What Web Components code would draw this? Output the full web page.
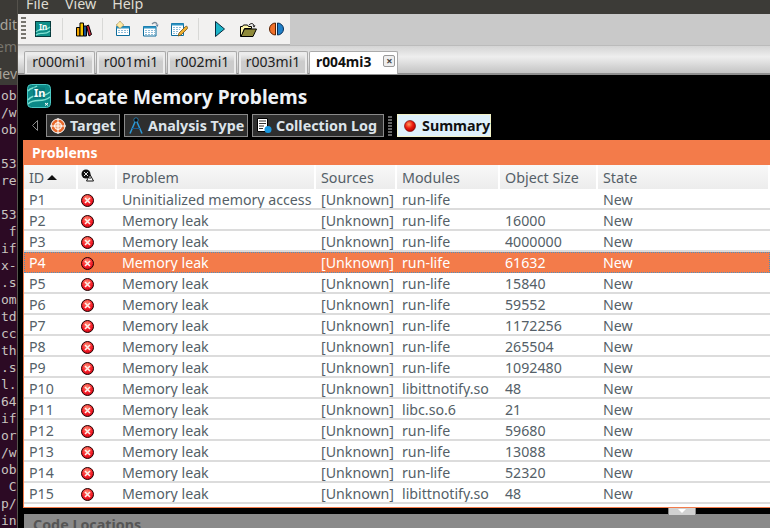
<!DOCTYPE html>
<html>
<head>
<meta charset="utf-8">
<style>
  html, body { margin: 0; padding: 0; background: #000; }
  body { width: 770px; height: 528px; overflow: hidden; font-family: "Noto Sans", "Open Sans", sans-serif; }
</style>
</head>
<body>
<vtune-app></vtune-app>

<script>
const ICONS = {
  intel: `<svg width="24" height="24" viewBox="0 0 24 24"><rect x=".5" y=".5" width="23" height="23" rx="4" fill="#0b8a88" stroke="#4cc8c4"/><path d="M1 16 C7 8 14 16 23 8 M1 20 C8 13 15 20 23 13 M1 7 C4 3 7 5 10 2" stroke="#7fe0d2" stroke-width="1.500" fill="none"/><path d="M6 3.500h12v11h-12z" fill="#0a6a70" opacity=".55"/><text x="7" y="13" font-family="Noto Sans" font-weight="700" font-size="11" fill="#fff">In</text><path d="M18 19l3 2.500M21 19l-3 2.500" stroke="#fff"/></svg>`,
  intelSmall: `<svg width="16" height="16" viewBox="0 0 16 16"><rect x=".5" y=".5" width="15" height="15" fill="#0f8f88" stroke="#063a3c"/><path d="M1 11 C5 6 9 12 15 6 M1 14 C5 10 9 15 15 10" stroke="#7fe0d2" stroke-width="1.100" fill="none"/><text x="4" y="9" font-family="Noto Sans" font-weight="700" font-size="8" fill="#fff">In</text></svg>`,
  bars: `<svg width="17" height="16" viewBox="0 0 17 16"><path d="M1.500 6.500h3.500v8.500h-3.500z" fill="#f2a400" stroke="#000"/><path d="M5 2h3.500v13h-3.500z" fill="#f7c600" stroke="#000"/><path d="M8.500 5h3v10h-3z" fill="#16518f" stroke="#000"/><path d="M11.500 5l2-1 3 9.500-2.500 1.500z" fill="#d8203a" stroke="#000"/></svg>`,
  newdoc: `<svg width="16" height="16" viewBox="0 0 16 16"><path d="M1.500 5.500h13v9h-13z" fill="#fff" stroke="#0c6c9c"/><path d="M1.500 5.500h13v2h-13z" fill="#2d94c4"/><path d="M3 9.500h10M3 11.500h10" stroke="#8cbcd8" stroke-dasharray="2 1"/><path d="M5 0l2 2.500 2 1.500-2 1.500-2 2-2-2-2-1.500 2-1.500z" fill="#ffe9a0" stroke="#a08a50" stroke-width=".6"/></svg>`,
  opendoc: `<svg width="16" height="16" viewBox="0 0 16 16"><path d="M.5 5.500h12.500v9.500h-12.500z" fill="#fff" stroke="#0c6c9c"/><path d="M.5 5.500h12.500v2h-12.500z" fill="#2d94c4"/><path d="M2 9.500h10M2 11.500h10M2 13.500h10" stroke="#8cbcd8" stroke-dasharray="2 1"/><path d="M9 3c2-2 4-2 5 0" stroke="#7a8a98" stroke-width="1.300" fill="none"/><path d="M12.500 3.500h3l-1 2.500z" fill="#5c7a98"/></svg>`,
  editdoc: `<svg width="17" height="16" viewBox="0 0 17 16"><path d="M.5 2.500h12v12h-12z" fill="#fff" stroke="#0c6c9c"/><path d="M.5 2.500h12v2h-12z" fill="#2d94c4"/><path d="M2 6.500h9M2 8.500h7M2 10.500h5M2 12.500h4" stroke="#8cbcd8" stroke-dasharray="2 1"/><path d="M7 15l1-3 6-6c1-1 2-1 2.500 0 .4.800 0 1.500-.5 2l-6 6z" fill="#f0b030" stroke="#6a5020" stroke-width=".8"/></svg>`,
  play: `<svg width="10" height="16" viewBox="0 0 10 16"><path d="M.5 .5v15l9-7.500z" fill="#1cb4c8" stroke="#062c40"/></svg>`,
  folder: `<svg width="17" height="15" viewBox="0 0 17 15"><path d="M.5 14.500v-10h2l1-1.500h4l1 1.500h3v2h-7l-3 8z" fill="#fff6a8" stroke="#000"/><path d="M1 14.500l3.500-7.500h12l-3.500 7.500z" fill="#8f8a3a" stroke="#000"/><path d="M9 3c2-2 4-2 5 .5" stroke="#000" fill="none"/><path d="M12.500 3.500h3l-1.500 2z"/></svg>`,
  compare: `<svg width="15" height="14" viewBox="0 0 15 14"><path d="M6.500 1a6 6 0 0 0 0 12z" fill="#f0702a" stroke="#5a2000"/><path d="M8.500 1a6 6 0 0 1 0 12z" fill="#2080c8" stroke="#08305a"/></svg>`,
  target: `<svg width="16" height="16" viewBox="0 0 16 16"><circle cx="8" cy="8" r="7" fill="#e8682a" stroke="#fff" stroke-width="1"/><circle cx="8" cy="8" r="3.500" fill="#f4a070" stroke="#fff"/><path d="M8 0v16M0 8h16" stroke="#fff"/></svg>`,
  compass: `<svg width="16" height="18" viewBox="0 0 16 18"><circle cx="8" cy="3" r="2.200" fill="#0a0a0a" stroke="#2c9ad8" stroke-width=".7"/><path d="M7 5l-5 11.500M9 5l5 11.500" stroke="#2c9ad8" stroke-width="1.500" fill="none"/><path d="M4 11.500h8" stroke="#1a5a90"/></svg>`,
  log: `<svg width="16" height="17" viewBox="0 0 16 17"><path d="M1.500 1.500h10v13h-10z" fill="#fff" stroke="#000"/><path d="M3 4h7M3 6.500h7M3 9h5M3 11.500h4" stroke="#333"/><circle cx="12" cy="12.500" r="3.500" fill="#1898e0"/></svg>`,
  ball: `<svg width="12" height="12" viewBox="0 0 12 12"><defs><radialGradient id="b" cx=".4" cy=".35" r=".7"><stop offset="0" stop-color="#ff9a60"/><stop offset=".5" stop-color="#ee1c10"/><stop offset="1" stop-color="#a00"/></radialGradient></defs><circle cx="6" cy="6" r="5.500" fill="url(#b)" stroke="#600" stroke-width=".6"/></svg>`,
  error: `<svg width="13" height="13" viewBox="0 0 13 13"><defs><radialGradient id="e" cx=".45" cy=".3" r=".8"><stop offset="0" stop-color="#ff8a70"/><stop offset=".55" stop-color="#f8202a"/><stop offset="1" stop-color="#c00010"/></radialGradient></defs><circle cx="6.500" cy="6.500" r="6" fill="url(#e)" stroke="#200" stroke-width="1"/><path d="M4 4l5 5M9 4l-5 5" stroke="#fff0ea" stroke-width="1.600"/></svg>`,
  severity: `<svg width="13" height="13" viewBox="0 0 13 13"><circle cx="5" cy="5" r="4.500" fill="#111"/><path d="M3 3l4 4M7 3l-4 4" stroke="#fff" stroke-width=".9"/><path d="M9 5.500l3.500 6.500h-7z" fill="#fff" stroke="#111"/><path d="M9 7.500v2.500" stroke="#111"/></svg>`,
  back: `<svg width="6" height="11" viewBox="0 0 6 11"><path d="M5.500 .5v10l-5-5z" fill="#000" stroke="#8a8a8a"/></svg>`
};

class AppIcon extends HTMLElement {
  connectedCallback() {
    this.attachShadow({ mode: "open" });
    this.shadowRoot.innerHTML = `
      <style>:host { display: inline-flex; align-items: center; justify-content: center; flex: none; } svg { display: block; }</style>
      ${ICONS[this.getAttribute("name")]}`;
  }
}

class TerminalStrip extends HTMLElement {
  constructor() {
    super();
    this.attachShadow({ mode: "open" });
    const lines = ["ob", "/w", "ob", "", "53", "re", "", "53", " f", "if", "x-", ".s", "om", "td", "cc", "th", ".s", "l.", "64", "if", "or", "/w", "ob", " C", "p/", "in"];
    this.shadowRoot.innerHTML = `
      <style>
        :host { display: block; width: 18px; height: 528px; box-sizing: border-box; overflow: hidden; background: #2c0a24; color: #c8c4c0;
          font: 13px/17px "DejaVu Sans Mono", monospace; border-right: 1px solid #55524c; }
        .menu { height: 85px; box-sizing: border-box; padding-top: 15px; background: #3c3a36; font: 14px/20px "Noto Sans", sans-serif; color: #a8a49c; text-align: right; }
        .menu div { height: 22px; white-space: nowrap; overflow: hidden; direction: rtl; }
        .menu .dim { color: #77746c; }
        .menu .last { margin-top: 5px; }
        .term { padding: 2px 0 0 1px; }
        .line { height: 17px; white-space: pre; overflow: hidden; }
      </style>
      <div class="menu"><div>dit</div><div class="dim">em</div><div class="last">iev</div></div>
      <div class="term">${lines.map(l => `<div class="line">${l}</div>`).join("")}</div>`;
  }
}

class MenuBar extends HTMLElement {
  constructor() {
    super();
    this.attachShadow({ mode: "open" });
    this.shadowRoot.innerHTML = `
      <style>
        :host { display: flex; height: 14px; background: #3c3b37; color: #dfdbd2; font-size: 14.300px; overflow: hidden; align-items: flex-end; padding-left: 8px; gap: 16px; }
        span { line-height: 20px; }
      </style>
      <span>File</span><span>View</span><span>Help</span>`;
  }
}

class MainToolbar extends HTMLElement {
  constructor() {
    super();
    this.attachShadow({ mode: "open" });
    this.shadowRoot.innerHTML = `
      <style>
        :host { display: block; height: 31px; background: #c9c9c9; }
        .bar { display: flex; align-items: center; width: 272px; height: 31px; background: #f2f1f0; box-sizing: border-box; border-bottom: 1px solid #b4b4b4; }
        .grip { width: 5px; height: 24px; margin: 0 9px 0 3px; background: repeating-linear-gradient(#77756f 0 2px, #f2f1f0 2px 4px); }
        .sep { width: 1px; height: 22px; background: #d8d8d6; }
        .b { display: flex; justify-content: center; }
      </style>
      <div class="bar">
        <div class="grip"></div>
        <div class="b" style="width:16px"><app-icon name="intelSmall"></app-icon></div>
        <div style="width:11px"></div><div class="sep"></div><div style="width:12px"></div>
        <div class="b" style="width:17px"><app-icon name="bars"></app-icon></div>
        <div style="width:10px"></div><div class="sep"></div><div style="width:12px"></div>
        <div class="b" style="width:16px"><app-icon name="newdoc"></app-icon></div>
        <div style="width:12px"></div>
        <div class="b" style="width:16px"><app-icon name="opendoc"></app-icon></div>
        <div style="width:12px"></div>
        <div class="b" style="width:17px"><app-icon name="editdoc"></app-icon></div>
        <div style="width:10px"></div><div class="sep"></div><div style="width:16px"></div>
        <div class="b" style="width:10px"><app-icon name="play"></app-icon></div>
        <div style="width:15px"></div>
        <div class="b" style="width:17px"><app-icon name="folder"></app-icon></div>
        <div style="width:12px"></div>
        <div class="b" style="width:15px"><app-icon name="compare"></app-icon></div>
      </div>`;
  }
}

class ResultTabs extends HTMLElement {
  constructor() {
    super();
    this.attachShadow({ mode: "open" });
    const tabs = [["r000mi1", 71], ["r001mi1", 70], ["r002mi1", 70], ["r003mi1", 70]];
    this.shadowRoot.innerHTML = `
      <style>
        :host { display: flex; height: 30px; box-sizing: border-box; padding: 5px 0 0 6px; gap: 1px; color: #222; font-size: 14px;
          background: linear-gradient(#d4d4d4, #eee 40%, #c4c4c4); border-top: 1px solid #bbb; border-bottom: 2px solid #8f8f8f; }
        .tab { box-sizing: border-box; height: 23px; border: 1px solid #aaa; border-bottom: 0; border-radius: 2px 2px 0 0; padding: 2px 2px 0; background: #ececec; }
        .tab div { height: 19px; line-height: 15px; text-align: center; background: linear-gradient(#eee, #ccc 40%, #ccc); }
        .on { width: 89px; background: #fff; display: flex; align-items: center; padding: 0 0 4px 6px; font-weight: 700; font-size: 13.800px; gap: 12px; color: #111; }
        .x { width: 10px; height: 10px; border: 1px solid #999; border-radius: 2px; color: #444; font-size: 11px; line-height: 10px; text-align: center; background: #eee; }
      </style>
      ${tabs.map(t => `<div class="tab" style="width:${t[1]}px"><div>${t[0]}</div></div>`).join("")}
      <div class="tab on">r004mi3<span class="x">×</span></div>`;
  }
}

class NavButton extends HTMLElement {
  constructor() {
    super();
    this.attachShadow({ mode: "open" });
    this.shadowRoot.innerHTML = `
      <style>
        :host { display: inline-flex; align-items: center; gap: 4px; height: 23px; box-sizing: border-box; padding: 0 3px; background: #2e2e2e; border: 1px solid #8a8a8a; color: #dde4ea; font-size: 14.300px; font-weight: 700; white-space: nowrap; }
        :host([active]) { background: #dff1fb; border-color: #f4f4c8; color: #111; gap: 6px; padding: 0 4px 0 6px; }
      </style>
      <slot name="icon"></slot><slot></slot>`;
  }
}

class AnalysisHeader extends HTMLElement {
  constructor() {
    super();
    this.attachShadow({ mode: "open" });
    this.shadowRoot.innerHTML = `
      <style>
        :host { display: block; height: 65px; background: #000; box-sizing: border-box; padding: 9px 0 0 9px; }
        .title { display: flex; align-items: center; gap: 13px; height: 24px; color: #eef2f6; font-size: 19.200px; font-weight: 700; }
        .nav { display: flex; align-items: center; gap: 4px; margin-top: 6px; }
        .back { margin: 0 4px 0 5px; }
        .grip { width: 4px; height: 20px; margin: 0 1px 0 0; background: repeating-linear-gradient(#666 0 2px, #000 2px 3px); }
      </style>
      <div class="title"><app-icon name="intel"></app-icon><span>Locate Memory Problems</span></div>
      <div class="nav">
        <app-icon class="back" name="back"></app-icon>
        <nav-button style="width:74px"><app-icon slot="icon" name="target"></app-icon>Target</nav-button>
        <nav-button style="width:124px"><app-icon slot="icon" name="compass"></app-icon>Analysis Type</nav-button>
        <nav-button style="width:132px"><app-icon slot="icon" name="log"></app-icon>Collection Log</nav-button>
        <div class="grip"></div>
        <nav-button active style="width:94px"><app-icon slot="icon" name="ball"></app-icon>Summary</nav-button>
      </div>`;
  }
}

const COLS = "53px 39px 199px 81px 103px 98px 1fr";

class ProblemRow extends HTMLElement {
  constructor() {
    super();
    this.attachShadow({ mode: "open" });
    const [id, problem, src, mod, size, state] = JSON.parse(this.getAttribute("data"));
    this.shadowRoot.innerHTML = `
      <style>
        :host { display: grid; grid-template-columns: ${COLS}; height: 21px; box-sizing: border-box; padding-top: 1px; border-bottom: 2px solid #dcdcdc; color: #555f68; font-size: 14.200px; line-height: 19px; background: #fff; white-space: nowrap; }
        :host([selected]) { background: #f37b4a; color: #fff; border-bottom-color: #f37b4a; outline: 1px dotted #4a90c0; outline-offset: -1px; }
        .c { padding-left: 6px; overflow: hidden; }
        .i { display: flex; justify-content: flex-start; padding: 2px 0 0 4px; height: 16px; }
      </style>
      <div class="c" style="padding-left:5px">${id}</div>
      <div class="i"><app-icon name="error"></app-icon></div>
      <div class="c">${problem}</div>
      <div class="c">${src}</div>
      <div class="c">${mod}</div>
      <div class="c">${size}</div>
      <div class="c">${state}</div>`;
  }
}

class ProblemsPane extends HTMLElement {
  constructor() {
    super();
    this.attachShadow({ mode: "open" });
    const rows = [
      ["P1", "Uninitialized memory access", "run-life", ""],
      ["P2", "Memory leak", "run-life", "16000"],
      ["P3", "Memory leak", "run-life", "4000000"],
      ["P4", "Memory leak", "run-life", "61632"],
      ["P5", "Memory leak", "run-life", "15840"],
      ["P6", "Memory leak", "run-life", "59552"],
      ["P7", "Memory leak", "run-life", "1172256"],
      ["P8", "Memory leak", "run-life", "265504"],
      ["P9", "Memory leak", "run-life", "1092480"],
      ["P10", "Memory leak", "libittnotify.so", "48"],
      ["P11", "Memory leak", "libc.so.6", "21"],
      ["P12", "Memory leak", "run-life", "59680"],
      ["P13", "Memory leak", "run-life", "13088"],
      ["P14", "Memory leak", "run-life", "52320"],
      ["P15", "Memory leak", "libittnotify.so", "48"]
    ];
    const esc = s => JSON.stringify(s).replace(/"/g, "&quot;");
    this.shadowRoot.innerHTML = `
      <style>
        :host { display: block; margin-left: 5px; background: #fff; border-left: 1px solid #f37b4a; border-bottom: 1px solid #f37b4a; height: 368px; box-sizing: border-box; overflow: hidden; }
        .title { height: 25px; margin-left: -1px; background: #f37b4a; color: #fff; font-size: 14px; font-weight: 700; line-height: 25px; padding-left: 9px; }
        .head { display: grid; grid-template-columns: 54px 39px 199px 81px 103px 98px 1fr; height: 24px; background: #f0f0f0; color: #555f68; font-size: 14.300px; line-height: 23px; }
        .head div { padding-left: 5px; background: linear-gradient(#f8f8f8, #ececec); border-right: 2px solid #fff; box-sizing: border-box; display: flex; align-items: center; gap: 3px; }
        .tri { width: 0; height: 0; border: 5px solid transparent; border-top: 0; border-bottom: 5px solid #111; }
      </style>
      <div class="title">Problems</div>
      <div class="head">
        <div>ID<span class="tri"></span></div>
        <div style="padding-left:3px"><app-icon name="severity" style="margin-top:-4px"></app-icon></div>
        <div>Problem</div><div>Sources</div><div>Modules</div><div>Object Size</div><div>State</div>
      </div>
      ${rows.map(r => `<problem-row ${r[0] === "P4" ? "selected" : ""} data="${esc([r[0], r[1], "[Unknown]", r[2], r[3], "New"])}"></problem-row>`).join("")}`;
  }
}

class CodeLocations extends HTMLElement {
  constructor() {
    super();
    this.attachShadow({ mode: "open" });
    this.shadowRoot.innerHTML = `
      <style>
        :host { display: block; position: relative; padding-top: 6px; }
        .handle { position: absolute; right: 74px; top: 0; width: 28px; height: 7px; box-sizing: border-box; background: #d0d0d0; border-left: 1px solid #888; border-right: 1px solid #888; }
        .handle::after { content: ""; position: absolute; left: 9px; top: 1px; border: 4px solid transparent; border-bottom: 0; border-top: 4px solid #fff; }
        .pane { margin-left: 6px; height: 14px; background: #8a8a8a; color: #555; font-size: 14.300px; font-weight: 700; padding-left: 9px; line-height: 21px; overflow: hidden; }
      </style>
      <div class="handle"></div>
      <div class="pane">Code Locations</div>`;
  }
}

class VtuneApp extends HTMLElement {
  constructor() {
    super();
    this.attachShadow({ mode: "open" });
    this.shadowRoot.innerHTML = `
      <style>
        :host { display: grid; grid-template-columns: 18px 1fr; width: 770px; height: 528px; overflow: hidden; background: #000; }
        main { min-width: 0; }
      </style>
      <terminal-strip></terminal-strip>
      <main>
        <menu-bar></menu-bar>
        <main-toolbar></main-toolbar>
        <result-tabs></result-tabs>
        <analysis-header></analysis-header>
        <problems-pane></problems-pane>
        <code-locations></code-locations>
      </main>`;
  }
}

customElements.define("app-icon", AppIcon);
customElements.define("terminal-strip", TerminalStrip);
customElements.define("menu-bar", MenuBar);
customElements.define("main-toolbar", MainToolbar);
customElements.define("result-tabs", ResultTabs);
customElements.define("nav-button", NavButton);
customElements.define("analysis-header", AnalysisHeader);
customElements.define("problem-row", ProblemRow);
customElements.define("problems-pane", ProblemsPane);
customElements.define("code-locations", CodeLocations);
customElements.define("vtune-app", VtuneApp);
</script>
</body>
</html>
